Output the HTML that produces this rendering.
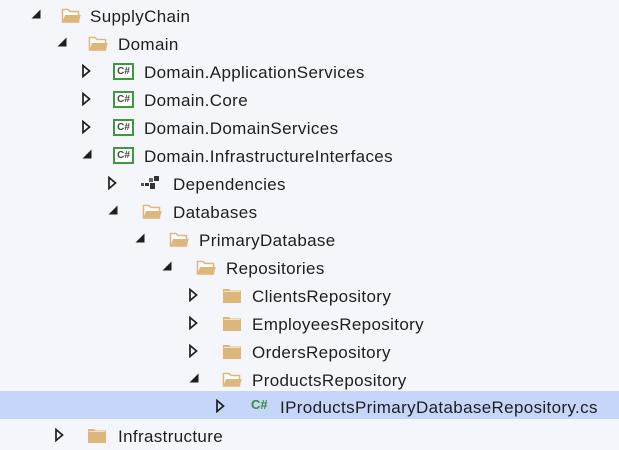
<!DOCTYPE html>
<html><head><style>
body{margin:0;width:619px;height:448px;background:#f5f6fc;font-family:"Liberation Sans",sans-serif;font-size:17px;color:#1e1e1e;position:relative;overflow:hidden}
.r{position:absolute;left:0;width:619px;height:28px}
.sel{background:#c6d6fb}
.a{position:absolute;top:7px}
.i{position:absolute;top:5px}
.t{position:absolute;top:5px;white-space:nowrap;letter-spacing:0.35px}
.cs{position:absolute;top:5px;width:17px;height:13px;border:2px solid #3c9a3c;background:#fff;font:bold 10px "Liberation Sans",sans-serif;color:#444;text-align:center;line-height:13px}
</style></head><body>
<svg width="0" height="0" style="position:absolute">
<defs>
<symbol id="exp" viewBox="0 0 10 10"><path d="M9.5 0.5 L9.5 9.5 L0.5 9.5 Z" fill="#1e1e1e"/></symbol>
<symbol id="col" viewBox="0 0 10 14"><path d="M2 1.5 L8.5 7 L2 12.5 Z" fill="none" stroke="#1e1e1e" stroke-width="1.7"/></symbol>
<symbol id="of" viewBox="0 0 20 17"><path d="M1.5 2.5 H7 L9 4.5 H17.5 V15 H1.5 Z" fill="#fff" stroke="#dcb67a" stroke-width="1.5"/><path d="M1.5 15 L4 8 H19.8 L17.5 15 Z" fill="#dcb67a"/></symbol>
<symbol id="cf" viewBox="0 0 20 17"><path d="M1 2 H7 L8.5 3.5 H19 V16 H1 Z" fill="#dcb67a"/><path d="M2 4.5 H18" stroke="#f3e3c5" stroke-width="1"/></symbol>
</defs></svg>

<div class="r" style="top:2px"><svg class="a" style="left:31px" width="10" height="10"><use href="#exp"/></svg><svg class="i" style="left:61px" width="20" height="17"><use href="#of"/></svg><span class="t" style="left:90px">SupplyChain</span></div>
<div class="r" style="top:30px"><svg class="a" style="left:57px" width="10" height="10"><use href="#exp"/></svg><svg class="i" style="left:88px" width="20" height="17"><use href="#of"/></svg><span class="t" style="left:118px">Domain</span></div>
<div class="r" style="top:58px"><svg class="a" style="left:81px;top:6px" width="10" height="14"><use href="#col"/></svg><div class="cs" style="left:113px">C#</div><span class="t" style="left:144px">Domain.ApplicationServices</span></div>
<div class="r" style="top:86px"><svg class="a" style="left:81px;top:6px" width="10" height="14"><use href="#col"/></svg><div class="cs" style="left:113px">C#</div><span class="t" style="left:144px">Domain.Core</span></div>
<div class="r" style="top:114px"><svg class="a" style="left:81px;top:6px" width="10" height="14"><use href="#col"/></svg><div class="cs" style="left:113px">C#</div><span class="t" style="left:144px">Domain.DomainServices</span></div>
<div class="r" style="top:142px"><svg class="a" style="left:82px" width="10" height="10"><use href="#exp"/></svg><div class="cs" style="left:113px">C#</div><span class="t" style="left:144px">Domain.InfrastructureInterfaces</span></div>
<div class="r" style="top:170px"><svg class="a" style="left:107px;top:6px" width="10" height="14"><use href="#col"/></svg>
<svg class="i" style="left:141px;top:6px" width="20" height="15"><rect x="0" y="7" width="3" height="3" fill="#555"/><rect x="4" y="7" width="4" height="3" fill="#333"/><rect x="8" y="2" width="4" height="4" fill="#666"/><rect x="13" y="0" width="5" height="5" fill="#333"/><rect x="9" y="7" width="5" height="6" fill="#333"/></svg>
<span class="t" style="left:173px">Dependencies</span></div>
<div class="r" style="top:198px"><svg class="a" style="left:108px" width="10" height="10"><use href="#exp"/></svg><svg class="i" style="left:142px" width="20" height="17"><use href="#of"/></svg><span class="t" style="left:173px">Databases</span></div>
<div class="r" style="top:226px"><svg class="a" style="left:135px" width="10" height="10"><use href="#exp"/></svg><svg class="i" style="left:169px" width="20" height="17"><use href="#of"/></svg><span class="t" style="left:199px">PrimaryDatabase</span></div>
<div class="r" style="top:254px"><svg class="a" style="left:162px" width="10" height="10"><use href="#exp"/></svg><svg class="i" style="left:196px" width="20" height="17"><use href="#of"/></svg><span class="t" style="left:226px">Repositories</span></div>
<div class="r" style="top:282px"><svg class="a" style="left:188px;top:6px" width="10" height="14"><use href="#col"/></svg><svg class="i" style="left:222px" width="20" height="17"><use href="#cf"/></svg><span class="t" style="left:252px">ClientsRepository</span></div>
<div class="r" style="top:310px"><svg class="a" style="left:188px;top:6px" width="10" height="14"><use href="#col"/></svg><svg class="i" style="left:222px" width="20" height="17"><use href="#cf"/></svg><span class="t" style="left:252px">EmployeesRepository</span></div>
<div class="r" style="top:338px"><svg class="a" style="left:188px;top:6px" width="10" height="14"><use href="#col"/></svg><svg class="i" style="left:222px" width="20" height="17"><use href="#cf"/></svg><span class="t" style="left:252px">OrdersRepository</span></div>
<div class="r" style="top:366px"><svg class="a" style="left:189px" width="10" height="10"><use href="#exp"/></svg><svg class="i" style="left:222px" width="20" height="17"><use href="#of"/></svg><span class="t" style="left:252px">ProductsRepository</span></div>
<div class="r sel" style="top:391px"><svg class="a" style="left:215px;top:8px" width="10" height="14"><use href="#col"/></svg><span style="position:absolute;left:251px;top:6px;font:bold 13px 'Liberation Sans',sans-serif;color:#388a34">C#</span><span class="t" style="left:280px;top:7px">IProductsPrimaryDatabaseRepository.cs</span></div>
<div class="r" style="top:422px"><svg class="a" style="left:54px;top:6px" width="10" height="14"><use href="#col"/></svg><svg class="i" style="left:87px" width="20" height="17"><use href="#cf"/></svg><span class="t" style="left:118px">Infrastructure</span></div>
</body></html>
